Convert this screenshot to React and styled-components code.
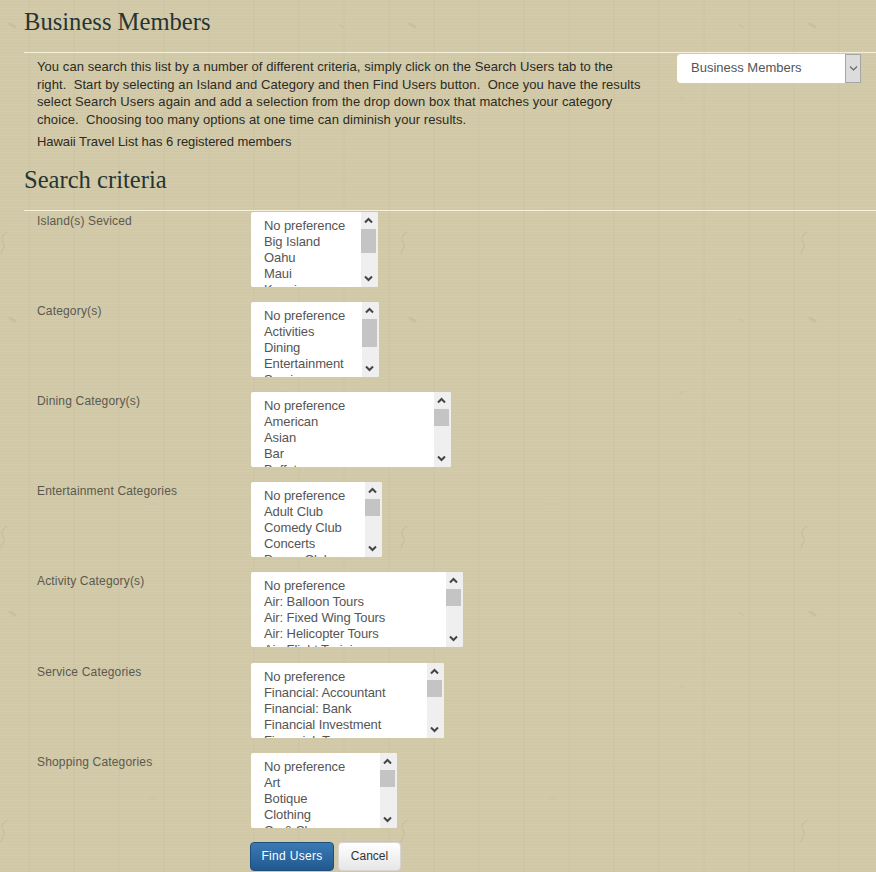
import React from "react";
import styled, { createGlobalStyle } from "styled-components";

const squiggles = encodeURIComponent(`<svg xmlns="http://www.w3.org/2000/svg" width="400" height="294"><g fill="none" stroke="#b9af8e" stroke-linecap="round"><path d="M7 232c-3 2-5 4-5 7s3 4 2 7-2 5-3 8" stroke-width="1.2" opacity=".4"/><path d="M407 232c-3 2-5 4-5 7s3 4 2 7-2 5-3 8" stroke-width="1.2" opacity=".4"/><path d="M10 24l5 3" stroke-width="3" opacity=".35"/><path d="M340 25l3 2" stroke-width="2" opacity=".25"/><path d="M150 210l6 0" stroke-width="1.5" opacity=".2"/><path d="M280 100l3-3" stroke-width="1.5" opacity=".22"/></g></svg>`);

const GlobalStyle = createGlobalStyle`
  html, body {
    margin: 0;
    padding: 0;
  }
  body {
    background-color: #d2caa9;
    background-image:
      url("data:image/svg+xml,${squiggles}"),
      repeating-linear-gradient(90deg, transparent 0 28px, rgba(130, 115, 80, 0.03) 28px 30px, transparent 30px 45px),
      repeating-linear-gradient(0deg, rgba(120, 105, 70, 0.03) 0 1px, transparent 1px 3px);
    font-family: "Liberation Sans", Arial, sans-serif;
    color: #333;
  }
`;

const Page = styled.div`
  width: 876px;
  height: 872px;
  overflow: hidden;
  padding-left: 24px;
  box-sizing: border-box;
`;

const Heading = styled.h2`
  margin: 0;
  height: ${props => props.$height}px;
  padding-top: ${props => props.$top}px;
  box-sizing: border-box;
  border-bottom: 1px solid #f6f0d8;
  font: 400 24.6px/26px "Liberation Serif", serif;
  color: #263533;
`;

const Intro = styled.div`
  display: flex;
  justify-content: space-between;
  align-items: flex-start;
  padding-left: 13px;
  padding-right: 15px;
`;

const IntroText = styled.div`
  width: 604px;
  padding-top: 5px;
  font-size: 13px;
  line-height: 17.6px;
  color: #2b2b24;
`;

const Paragraph = styled.p`
  margin: 0 0 ${props => props.$gap}px;
  letter-spacing: ${props => props.$spacing}px;
`;

const ViewSelect = styled.div`
  display: flex;
  width: 184px;
  height: 29px;
  margin-top: 1px;
`;

const ViewValue = styled.div`
  flex: 1;
  padding-left: 14px;
  background: #fff;
  border-radius: 4px 0 0 4px;
  font-size: 13px;
  line-height: 27px;
  color: #555;
`;

const ViewArrow = styled.div`
  display: flex;
  align-items: center;
  justify-content: center;
  width: 16px;
  background: #dcdcdc;
  border: 1px solid #a5a5a5;
  box-sizing: border-box;
`;

const Form = styled.div`
  display: flex;
  flex-direction: column;
  padding-top: 1px;
`;

const FieldRow = styled.div`
  display: grid;
  grid-template-columns: 214px auto;
  justify-content: start;
  height: ${props => props.$height}px;
  padding-left: 13px;
`;

const FieldLabel = styled.div`
  font-size: 12px;
  line-height: 18px;
  letter-spacing: 0.17px;
  color: #5a5950;
`;

const ListBox = styled.div`
  display: flex;
  width: ${props => props.$width}px;
  height: 75px;
  background: #fff;
  border-radius: 2px;
  overflow: hidden;
`;

const Options = styled.div`
  flex: 1;
  min-width: 0;
  padding: 6px 0 0 13px;
  font-size: 13px;
  line-height: 16px;
  letter-spacing: -0.1px;
  color: #555;
  white-space: nowrap;
  overflow: hidden;
`;

const Scrollbar = styled.div`
  display: flex;
  flex-direction: column;
  width: 17px;
  padding-right: 2px;
  box-sizing: border-box;
  background: #efeff0;
`;

const ScrollButton = styled.div`
  display: flex;
  align-items: center;
  justify-content: center;
  height: 17px;
`;

const ScrollThumb = styled.div`
  height: ${props => props.$height}px;
  background: #c4c4c4;
`;

const ScrollTrack = styled.div`
  flex: 1;
`;

const Buttons = styled.div`
  display: flex;
  gap: 4px;
  margin-left: 226px;
`;

const FindButton = styled.button`
  width: 84px;
  height: 29px;
  padding: 0;
  border: 1px solid #1f4f7d;
  border-radius: 4px;
  background: linear-gradient(#3a7ab5, #21598f);
  font: 12px "Liberation Sans", Arial, sans-serif;
  letter-spacing: 0.3px;
  color: #fff;
`;

const CancelButton = styled.button`
  width: 63px;
  height: 29px;
  padding: 0;
  border: 1px solid #d5d5d5;
  border-radius: 4px;
  background: linear-gradient(#fff, #e6e6e6);
  font: 12px "Liberation Sans", Arial, sans-serif;
  color: #333;
`;

const Chevron = ({ up, thin }) => (
  <svg width="9" height="7" viewBox="0 0 9 7">
    <path
      d={up ? "M1 5.5 4.5 2 8 5.5" : "M1 1.5 4.5 5 8 1.5"}
      fill="none"
      stroke={thin ? "#666" : "#444"}
      strokeWidth={thin ? 1.1 : 2}
    />
  </svg>
);

const FIELDS = [
  { label: "Island(s) Seviced", width: 127, height: 90, thumb: 24, options: ["No preference", "Big Island", "Oahu", "Maui", "Kauai"] },
  { label: "Category(s)", width: 128, height: 90, thumb: 28, options: ["No preference", "Activities", "Dining", "Entertainment", "Service"] },
  { label: "Dining Category(s)", width: 200, height: 90, thumb: 17, options: ["No preference", "American", "Asian", "Bar", "Buffet"] },
  { label: "Entertainment Categories", width: 131, height: 90, thumb: 17, options: ["No preference", "Adult Club", "Comedy Club", "Concerts", "Dance Club"] },
  { label: "Activity Category(s)", width: 212, height: 91, thumb: 17, options: ["No preference", "Air: Balloon Tours", "Air: Fixed Wing Tours", "Air: Helicopter Tours", "Air: Flight Training"] },
  { label: "Service Categories", width: 193, height: 90, thumb: 17, options: ["No preference", "Financial: Accountant", "Financial: Bank", "Financial Investment", "Financial: Tax"] },
  { label: "Shopping Categories", width: 146, height: 89, thumb: 17, options: ["No preference", "Art", "Botique", "Clothing", "Co & Shops"] },
];

const App = () => (
  <Page>
    <GlobalStyle />
    <Heading $height={53} $top={9}>Business Members</Heading>
    <Intro>
      <IntroText>
        <Paragraph $gap={5} $spacing={0.07}>
          You can search this list by a number of different criteria, simply click on the Search Users tab to the right.&nbsp; Start by selecting an Island and Category and then Find Users button.&nbsp; Once you have the results select Search Users again and add a selection from the drop down box that matches your category choice.&nbsp; Choosing too many options at one time can diminish your results.
        </Paragraph>
        <Paragraph $gap={6} $spacing={-0.05}>Hawaii Travel List has 6 registered members</Paragraph>
      </IntroText>
      <ViewSelect>
        <ViewValue>Business Members</ViewValue>
        <ViewArrow>
          <Chevron thin />
        </ViewArrow>
      </ViewSelect>
    </Intro>
    <Heading $height={54} $top={10}>Search criteria</Heading>
    <Form>
      {FIELDS.map(field => (
        <FieldRow key={field.label} $height={field.height}>
          <FieldLabel>{field.label}</FieldLabel>
          <ListBox $width={field.width}>
            <Options>
              {field.options.map(option => (
                <div key={option}>{option}</div>
              ))}
            </Options>
            <Scrollbar>
              <ScrollButton><Chevron up /></ScrollButton>
              <ScrollThumb $height={field.thumb} />
              <ScrollTrack />
              <ScrollButton><Chevron /></ScrollButton>
            </Scrollbar>
          </ListBox>
        </FieldRow>
      ))}
      <Buttons>
        <FindButton>Find Users</FindButton>
        <CancelButton>Cancel</CancelButton>
      </Buttons>
    </Form>
  </Page>
);

export default App;
